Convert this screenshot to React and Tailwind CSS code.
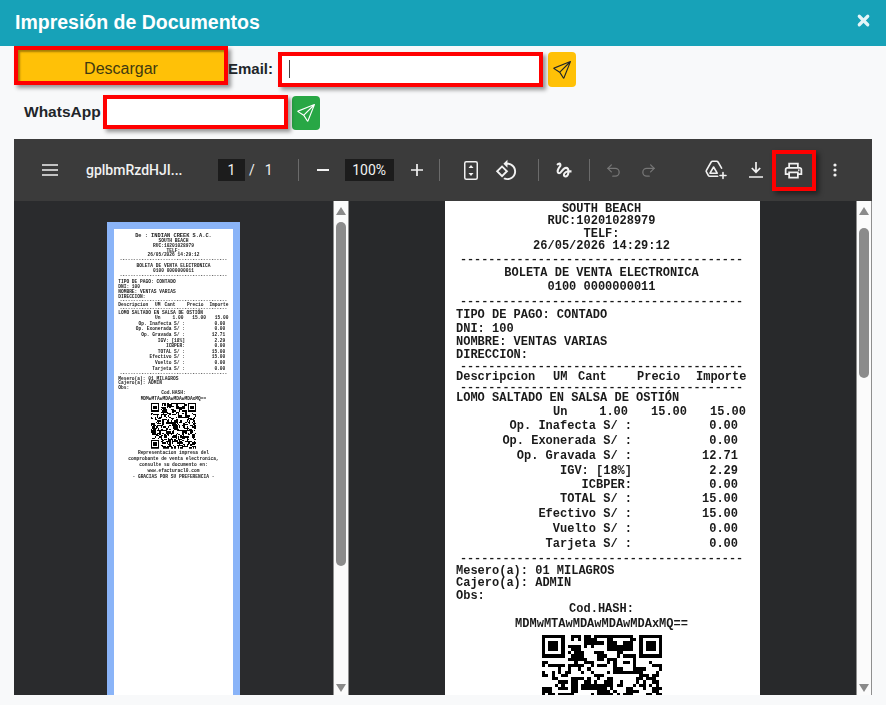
import { BsSend } from "react-icons/bs";
import { Undo2, Redo2, X } from "lucide-react";

const SANS = "font-['Liberation_Sans',Arial,sans-serif]";
const MONO = "font-['Liberation_Mono','Courier_New',monospace]";
const DASHES = "-".repeat(40);

// fake qr matrix, 37 modules with the three finder squares
function buildQr() {
  const n = 37;
  let seed = 7741;
  const next = () => {
    seed = (seed * 1103515245 + 12345) & 0x7fffffff;
    return (seed >> 12) % 100;
  };
  const rows = [];
  for (let y = 0; y < n; y++) {
    const row = [];
    for (let x = 0; x < n; x++) {
      const r = next();
      // neighbours repeat a bit so the modules clump like a real code
      if (x > 0 && r < 16) row.push(row[x - 1]);
      else if (y > 0 && r < 28) row.push(rows[y - 1][x]);
      else row.push(next() < 52);
    }
    rows.push(row);
  }
  const finder = (ox, oy) => {
    for (let y = -1; y < 8; y++) {
      for (let x = -1; x < 8; x++) {
        const px = ox + x;
        const py = oy + y;
        if (px < 0 || py < 0 || px >= n || py >= n) continue;
        const ring = x === 0 || x === 6 || y === 0 || y === 6;
        const core = x >= 2 && x <= 4 && y >= 2 && y <= 4;
        rows[py][px] = x >= 0 && x <= 6 && y >= 0 && y <= 6 && (ring || core);
      }
    }
  };
  finder(0, 0);
  finder(n - 7, 0);
  finder(0, n - 7);
  let d = "";
  rows.forEach((row, y) =>
    row.forEach((on, x) => {
      if (on) d += `M${x} ${y}h1v1h-1z`;
    })
  );
  return d;
}
const QR_PATH = buildQr();

function Qr() {
  return (
    <svg viewBox="0 0 37 37" className="w-[120px] h-[120px] mx-auto block" shapeRendering="crispEdges">
      <path d={QR_PATH} fill="#000" />
    </svg>
  );
}

function Dash({ className }) {
  return <div className={`text-center text-[11.8px] ${className}`}>{DASHES}</div>;
}

function Total({ label, value, className }) {
  return (
    <div className={`grid grid-cols-[176px_106px] text-right whitespace-pre ${className}`}>
      <span>{label}</span>
      <span>{value}</span>
    </div>
  );
}

function Receipt() {
  return (
    <div className={`w-[315px] bg-white pl-[11px] pr-[13px] pt-[10px] pb-[40px] text-[12px] font-bold text-[#1a1a1a] whitespace-pre ${MONO}`}>
      <div className="h-[16px] leading-[16px] text-center text-[14px]">De : INDIAN CREEK S.A.C.</div>
      <div className="h-[12px] leading-[12px] text-center">SOUTH BEACH</div>
      <div className="h-[13px] leading-[13px] text-center">RUC:10201028979</div>
      <div className="h-[12px] leading-[12px] text-center">TELF:</div>
      <div className="h-[13px] leading-[13px] text-center">26/05/2026 14:29:12</div>
      <Dash className="h-[13px] leading-[13px]" />
      <div className="h-[14px] leading-[14px] text-center">BOLETA DE VENTA ELECTRONICA</div>
      <div className="h-[14px] leading-[14px] text-center">0100 0000000011</div>
      <Dash className="h-[14px] leading-[14px]" />
      <div className="h-[14px] leading-[14px]">TIPO DE PAGO: CONTADO</div>
      <div className="h-[14px] leading-[14px]">DNI: 100</div>
      <div className="h-[13px] leading-[13px]">NOMBRE: VENTAS VARIAS</div>
      <div className="h-[13px] leading-[13px]">DIRECCION:</div>
      <Dash className="h-[9px] leading-[9px]" />
      <div className="h-[12px] leading-[12px] grid grid-cols-[97px_25px_59px_59px_1fr]">
        <span>Descripcion</span>
        <span>UM</span>
        <span>Cant</span>
        <span>Precio</span>
        <span>Importe</span>
      </div>
      <Dash className="h-[9px] leading-[9px]" />
      <div className="h-[13px] leading-[13px]">LOMO SALTADO EN SALSA DE OSTIÓN</div>
      <div className="h-[14px] leading-[14px] grid grid-cols-[97px_75px_59px_59px] text-right">
        <span />
        <span className="flex justify-between">
          <span>Un</span>
          <span>1.00</span>
        </span>
        <span>15.00</span>
        <span>15.00</span>
      </div>
      <Total className="h-[15px] leading-[15px]" label="Op. Inafecta S/ :" value="0.00" />
      <Total className="h-[15px] leading-[15px]" label="Op. Exonerada S/ :" value="0.00" />
      <Total className="h-[15px] leading-[15px]" label="Op. Gravada S/ :" value="12.71" />
      <Total className="h-[14px] leading-[14px]" label="IGV: [18%]" value="2.29" />
      <Total className="h-[14px] leading-[14px]" label="ICBPER:" value="0.00" />
      <Total className="h-[15px] leading-[15px]" label="TOTAL S/ :" value="15.00" />
      <Total className="h-[15px] leading-[15px]" label="Efectivo S/ :" value="15.00" />
      <Total className="h-[15px] leading-[15px]" label="Vuelto S/ :" value="0.00" />
      <Total className="h-[14px] leading-[14px]" label="Tarjeta S/ :" value="0.00" />
      <Dash className="h-[14px] leading-[14px]" />
      <div className="h-[12px] leading-[12px]">Mesero(a): 01 MILAGROS</div>
      <div className="h-[13px] leading-[13px]">Cajero(a): ADMIN</div>
      <div className="h-[12px] leading-[12px]">Obs:</div>
      <div className="h-[14px] leading-[14px] text-center">Cod.HASH:</div>
      <div className="h-[16px] leading-[16px] text-center">MDMwMTAwMDAwMDAwMDAxMQ==</div>
      <div className="mt-[3px]">
        <Qr />
      </div>
      <div className="mt-[3px] text-center leading-[16px]">
        <div>Representacion impresa del</div>
        <div>comprobante de venta electronica,</div>
        <div>consulte su documento en:</div>
        <div>www.efacturacl0.com</div>
        <div>- GRACIAS POR SU PREFERENCIA -</div>
      </div>
    </div>
  );
}

function Triangle({ down }) {
  return (
    <svg width="10" height="8" viewBox="0 0 10 8" className="shrink-0">
      <path d={down ? "M0 0h10L5 8z" : "M5 0l5 8H0z"} fill="#8a8a8a" />
    </svg>
  );
}

function Scrollbar({ thumb }) {
  return (
    <div className="w-[16px] shrink-0 flex flex-col items-center bg-[#fbfbfb] border-x border-[#8f8f8f] pt-[6px] pb-[3px]">
      <Triangle />
      <div className={`w-[10px] rounded-full bg-[#8b8b8b] ${thumb}`} />
      <div className="flex-1" />
      <Triangle down />
    </div>
  );
}

function Icon({ children, size = 24, className = "" }) {
  return (
    <svg width={size} height={size} viewBox="0 0 24 24" fill="#f1f1f1" className={className}>
      {children}
    </svg>
  );
}

function Sep({ className }) {
  return <div className={`w-px h-[22px] bg-[#6b6b6b] shrink-0 ${className}`} />;
}

function Toolbar() {
  return (
    <div className={`h-[62px] shrink-0 bg-[#3b3b3b] flex items-center text-[#f1f1f1] text-[14px] font-['Roboto',sans-serif]`}>
      <svg width="16" height="12" viewBox="0 0 16 12" className="ml-[28px] shrink-0" stroke="#f1f1f1" strokeWidth="1.6">
        <path d="M0 1h16M0 6h16M0 11h16" />
      </svg>
      <span className="ml-[28px] w-[106px] font-medium whitespace-nowrap">gplbmRzdHJI...</span>
      <span className="ml-[26px] w-[27px] h-[22px] bg-[#1c1c1c] flex items-center justify-center">1</span>
      <span className="ml-[4px]">/</span>
      <span className="ml-[10px]">1</span>
      <Sep className="ml-[25px]" />
      <svg width="12" height="2" viewBox="0 0 12 2" className="ml-[18px]" fill="#f1f1f1">
        <rect width="12" height="2" />
      </svg>
      <span className="ml-[16px] w-[49px] h-[22px] bg-[#1c1c1c] flex items-center justify-center">100%</span>
      <svg width="12" height="12" viewBox="0 0 14 14" className="ml-[17px]" fill="#f1f1f1">
        <path d="M6 0h2v6h6v2H8v6H6V8H0V6h6z" />
      </svg>
      <Sep className="ml-[16px]" />
      <svg width="14" height="19" viewBox="0 0 14 19" className="ml-[24px]" fill="none" stroke="#f1f1f1" strokeWidth="1.5">
        <rect x="0.75" y="0.75" width="12.5" height="17.5" rx="1.5" />
        <path d="M7 4l2.5 3h-5zM7 15l-2.5-3h5z" fill="#f1f1f1" stroke="none" />
      </svg>
      <Icon size={23} className="ml-[17px]">
        <path d="M7.34 6.41L.86 12.9l6.49 6.48 6.49-6.48-6.5-6.49zM3.69 12.9l3.66-3.66L11 12.9l-3.66 3.66-3.65-3.66zm15.67-6.26C17.61 4.88 15.3 4 13 4V.76L8.76 5 13 9.24V6c1.79 0 3.58.68 4.95 2.05 2.73 2.73 2.73 7.17 0 9.9C16.58 19.32 14.79 20 13 20c-.97 0-1.94-.21-2.84-.61l-1.49 1.49C10.02 21.62 11.51 22 13 22c2.3 0 4.61-.88 6.36-2.64 3.52-3.51 3.52-9.21 0-12.72z" />
      </Icon>
      <Sep className="ml-[20px]" />
      <Icon size={20} className="ml-[15px]">
        <path d="M4.59 6.89c.7-.71 1.4-1.35 1.71-1.22.5.2 0 1.03-.3 1.52-.25.42-2.86 3.89-2.86 6.31 0 1.28.48 2.34 1.34 2.98.75.56 1.74.73 2.64.46 1.07-.31 1.95-1.4 3.06-2.77 1.21-1.49 2.83-3.44 4.08-3.44 1.63 0 1.65 1.01 1.76 1.79-3.78.64-5.38 3.67-5.38 5.37 0 1.7 1.44 3.09 3.21 3.09 1.63 0 4.29-1.33 4.69-6.1H21v-2.5h-2.47c-.15-1.65-1.09-4.2-4.03-4.2-2.25 0-4.18 1.91-4.94 2.84-.58.73-2.06 2.48-2.29 2.72-.25.3-.68.84-1.11.84-.45 0-.72-.83-.36-1.92.35-1.09 1.4-2.86 1.85-3.52.78-1.14 1.3-1.92 1.3-3.28C8.95 3.69 7.31 3 6.44 3 5.12 3 3.97 4 3.72 4.25c-.36.36-.66.66-.88.93l1.75 1.71zm9.29 11.66c-.31 0-.74-.26-.74-.72 0-.6.73-2.2 2.87-2.76-.3 2.69-1.43 3.48-2.13 3.48z" />
      </Icon>
      <Sep className="ml-[15px]" />
      <Undo2 size={17} color="#767676" strokeWidth={1.8} className="ml-[15px]" />
      <Redo2 size={17} color="#767676" strokeWidth={1.8} className="ml-[18px]" />
      <svg width="22" height="20" viewBox="0 0 22 20" className="ml-[48px]" fill="none" stroke="#f1f1f1" strokeWidth="1.6" strokeLinecap="round" strokeLinejoin="round">
        <path d="M7.5 1.2h4.2c.6 0 1 .3 1.3.8l3.6 6.2M7.5 1.2c-.6 0-1 .3-1.3.8L1.4 10.4c-.3.5-.3 1 0 1.5l2 3.6c.3.5.7.7 1.3.7h8" />
        <path d="M8.6 7l3.6 6.2H5z" />
        <path d="M18 12.5v6M15 15.5h6" />
      </svg>
      <svg width="14" height="16" viewBox="0 0 14 16" className="ml-[22px]" fill="none" stroke="#f1f1f1" strokeWidth="1.7">
        <path d="M7 0v10M2.8 6L7 10.2 11.2 6M0 15h14" />
      </svg>
      {/* print button, marked with a red box in the screenshot */}
      <div className="ml-[9px] w-[44px] h-[41px] border-[4px] border-[#f00] shadow-[3px_3px_5px_rgba(0,0,0,0.45)] flex items-center justify-center shrink-0">
        <Icon size={21}>
          <path d="M19 8h-1V3H6v5H5c-1.66 0-3 1.34-3 3v6h4v4h12v-4h4v-6c0-1.66-1.34-3-3-3zM8 5h8v3H8V5zm8 12v2H8v-4h8v2zm2-2v-2H6v2H4v-4c0-.55.45-1 1-1h14c.55 0 1 .45 1 1v4h-2z" />
          <circle cx="18" cy="11.5" r="1" />
        </Icon>
      </div>
      <svg width="4" height="14" viewBox="0 0 4 14" className="ml-[17px]" fill="#f1f1f1">
        <circle cx="2" cy="2" r="1.6" />
        <circle cx="2" cy="7" r="1.6" />
        <circle cx="2" cy="12" r="1.6" />
      </svg>
    </div>
  );
}

function PdfViewer() {
  return (
    <div className="mx-[14px] flex-1 min-h-0 flex flex-col bg-[#292a2d]">
      <Toolbar />
      <div className="flex-1 min-h-0 flex">
        <div className="w-[319px] shrink-0 overflow-hidden bg-[#2a2b2d] pl-[93px] pt-[21px]">
          <div className="w-[133px] h-[600px] border-[7px] border-[#8ab4f8] bg-white overflow-hidden">
            <div className="w-[315px] origin-top-left scale-[0.38] blur-[0.5px]">
              <Receipt />
            </div>
          </div>
        </div>
        <Scrollbar thumb="mt-[7px] h-[344px]" />
        <div className="flex-1 min-w-0 overflow-hidden bg-[#28292b] flex justify-center">
          <div className="w-[315px] h-full overflow-hidden bg-white">
            <div className="-mt-[24px] blur-[0.3px]">
              <Receipt />
            </div>
          </div>
        </div>
        <Scrollbar thumb="mt-[13px] h-[150px]" />
      </div>
    </div>
  );
}

function FieldBox({ className, children }) {
  return (
    <div className={`relative border-[4px] border-[#f00] bg-white shadow-[3px_3px_4px_rgba(0,0,0,0.4)] shrink-0 ${className}`}>
      <input className="w-full h-full bg-transparent outline-none" aria-label="campo" />
      {children}
    </div>
  );
}

export default function App() {
  return (
    <div className={`h-screen flex flex-col overflow-hidden bg-[#f8f9fa] pb-[10px] text-[#212529] ${SANS}`}>
      <div className="h-[46px] shrink-0 bg-[#17a2b8] flex items-center justify-between pl-[15px] pr-[14px] text-white">
        <h1 className="text-[19.5px] font-bold">Impresión de Documentos</h1>
        <X size={17} strokeWidth={4.5} color="#e4f5f8" className="mb-[5px]" />
      </div>

      <div className="h-[41px] shrink-0 flex items-start pl-[14px]">
        <button className="w-[214px] h-[39px] pt-[6px] border-[4px] border-[#f00] bg-[#ffc107] shadow-[3px_3px_4px_rgba(0,0,0,0.4),inset_2px_2px_2px_rgba(0,0,0,0.35)] text-[16px] text-[#3f3a10]">
          Descargar
        </button>
        <span className="h-[39px] leading-[46px] text-[15px] font-bold">Email:</span>
        <FieldBox className="ml-[5px] mt-[6px] w-[265px] h-[35px]">
          <div className="absolute left-[7px] top-[4px] w-px h-[18px] bg-[#444]" />
        </FieldBox>
        <button className="ml-[5px] mt-[6px] w-[28px] h-[35px] rounded-[4px] bg-[#ffc107] flex items-center justify-center text-[#212529]">
          <BsSend size={18} />
        </button>
      </div>

      <div className="h-[52px] shrink-0 flex items-start pl-[24px] pt-[8px]">
        <span className="w-[79px] h-[34px] leading-[34px] text-[15.5px] font-bold whitespace-nowrap">WhatsApp</span>
        <FieldBox className="w-[185px] h-[34px]" />
        <button className="ml-[4px] mt-[1px] w-[28px] h-[34px] rounded-[4px] bg-[#28a745] flex items-center justify-center text-white">
          <BsSend size={18} />
        </button>
      </div>

      <PdfViewer />
    </div>
  );
}
